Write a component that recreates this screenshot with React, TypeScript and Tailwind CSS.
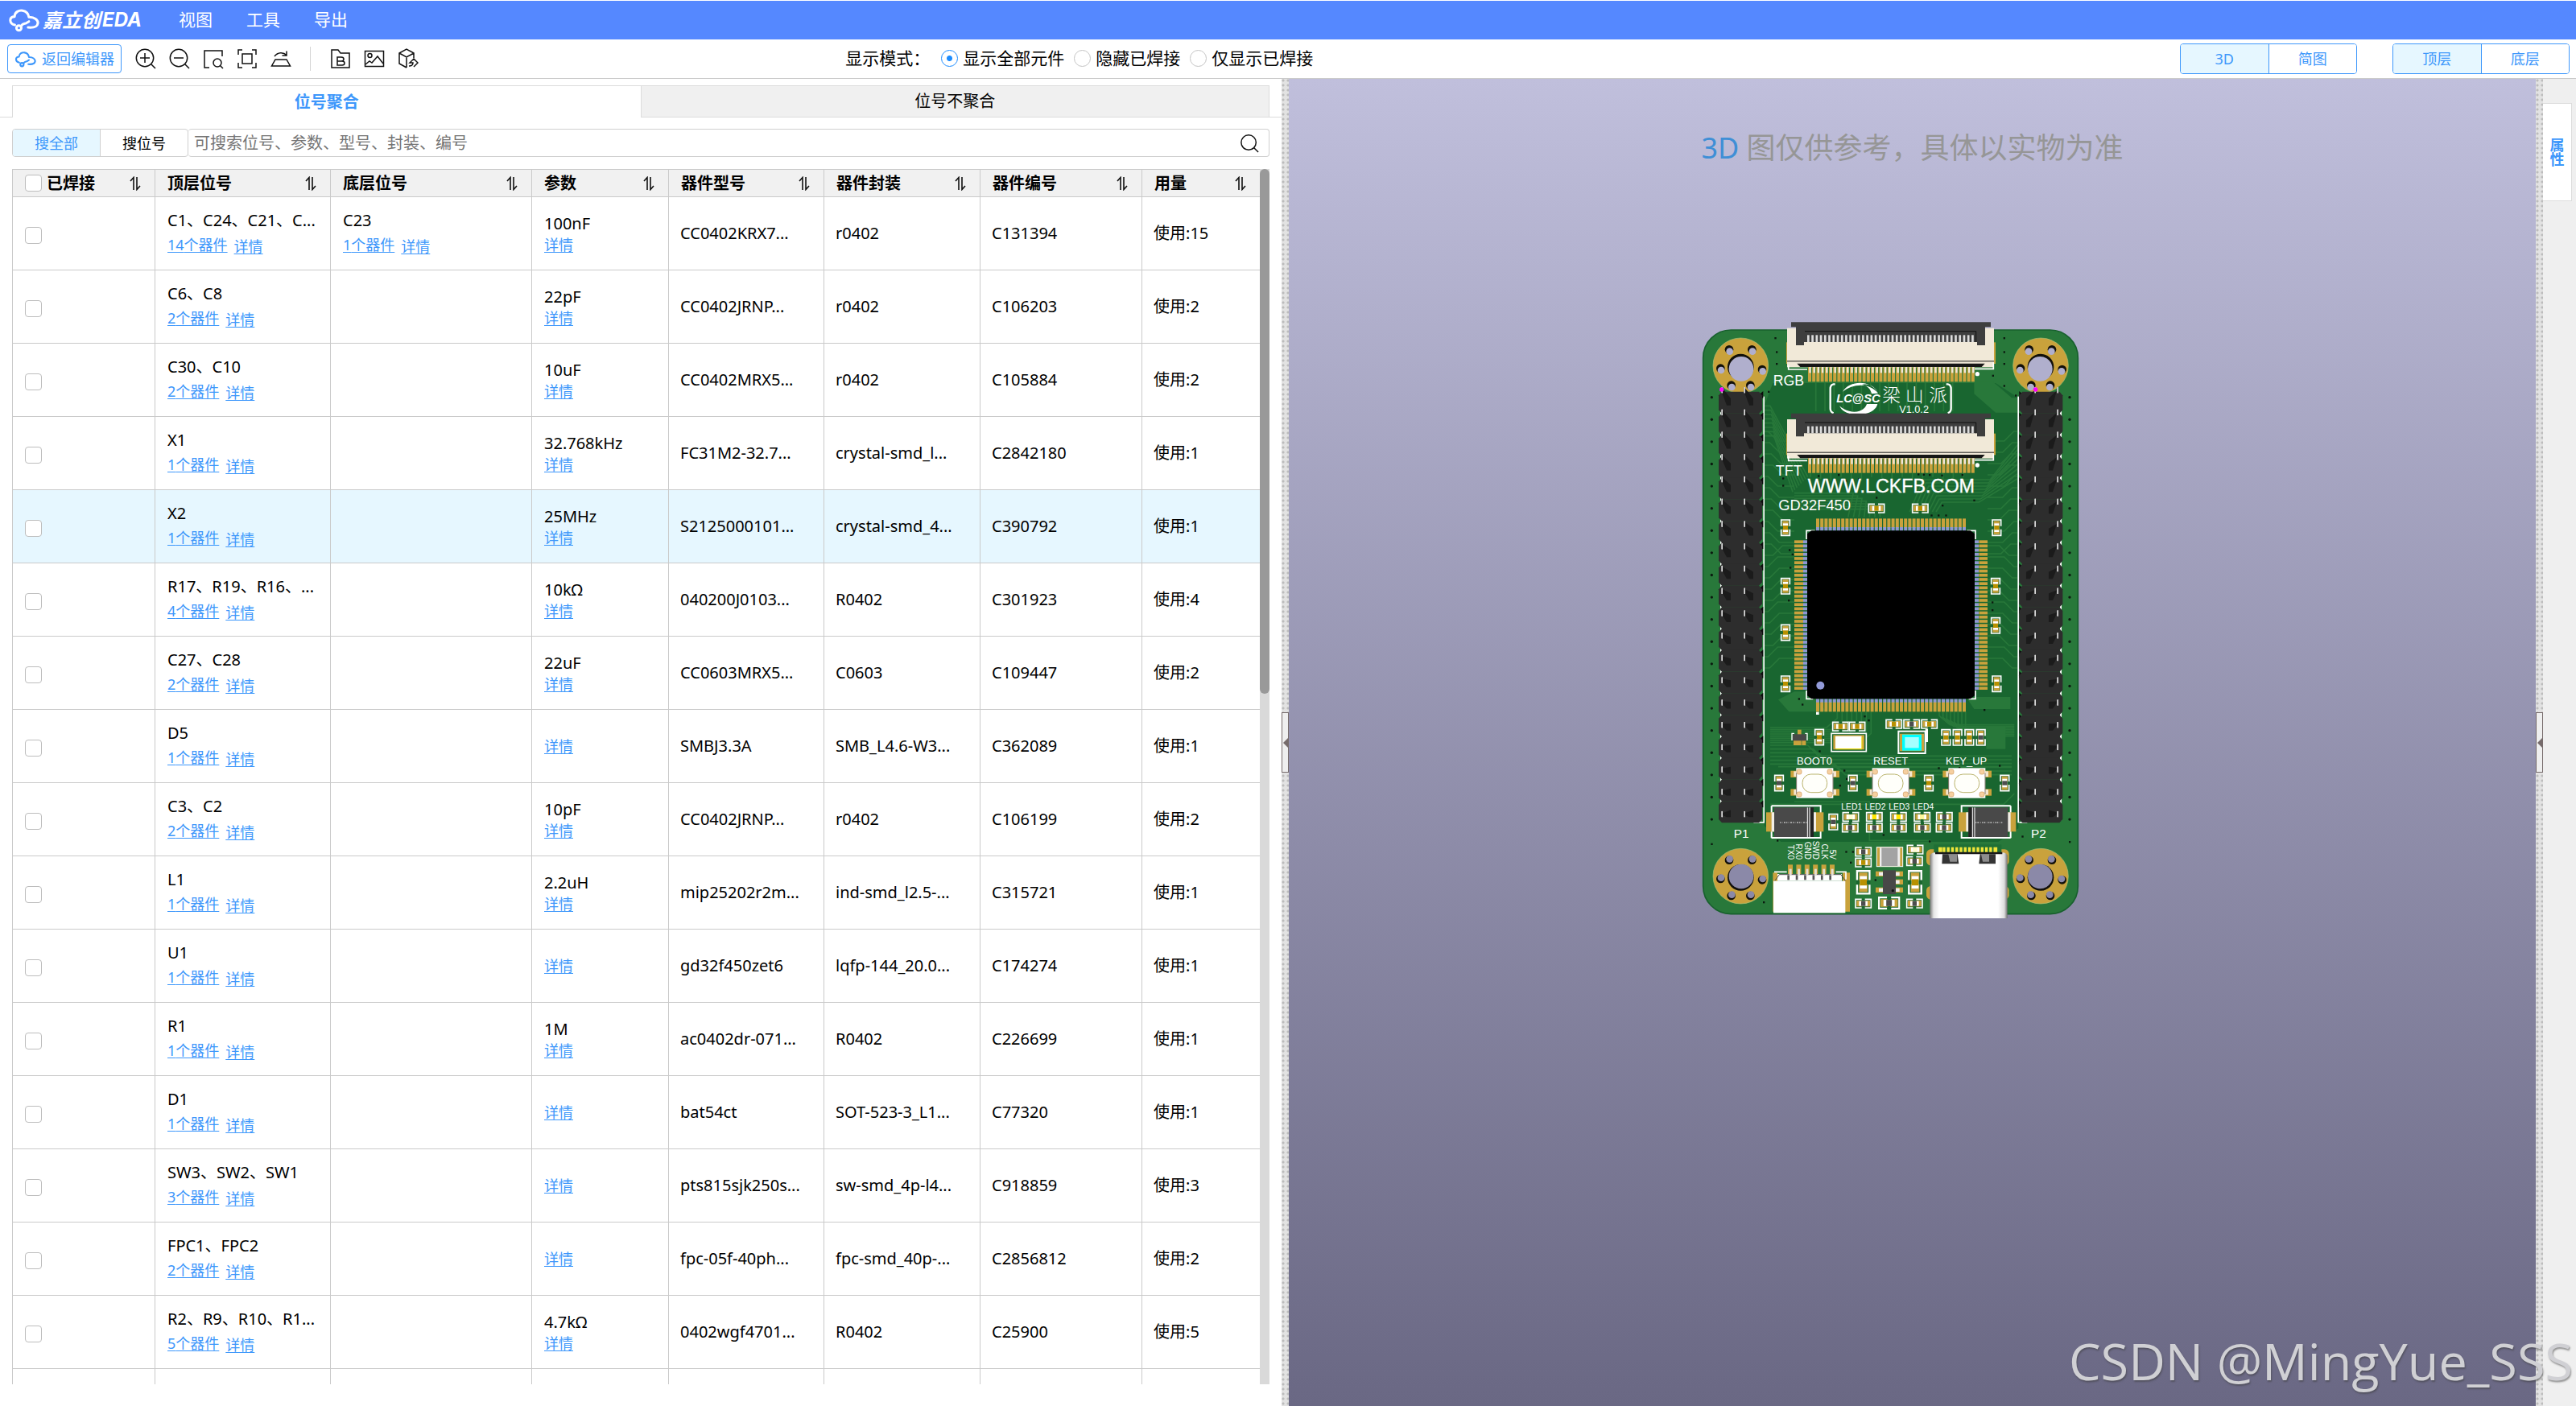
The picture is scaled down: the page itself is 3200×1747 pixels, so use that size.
import React from "react";

type Part = {
  top: string;
  topCount: number;
  bottom?: string;
  bottomCount?: number;
  value?: string;
  model: string;
  pack: string;
  code: string;
  used: number;
  active?: boolean;
};

const parts: Part[] = [
  { top: "C1、C24、C21、C...", topCount: 14, bottom: "C23", bottomCount: 1, value: "100nF", model: "CC0402KRX7...", pack: "r0402", code: "C131394", used: 15 },
  { top: "C6、C8", topCount: 2, value: "22pF", model: "CC0402JRNP...", pack: "r0402", code: "C106203", used: 2 },
  { top: "C30、C10", topCount: 2, value: "10uF", model: "CC0402MRX5...", pack: "r0402", code: "C105884", used: 2 },
  { top: "X1", topCount: 1, value: "32.768kHz", model: "FC31M2-32.7...", pack: "crystal-smd_l...", code: "C2842180", used: 1 },
  { top: "X2", topCount: 1, value: "25MHz", model: "S2125000101...", pack: "crystal-smd_4...", code: "C390792", used: 1, active: true },
  { top: "R17、R19、R16、...", topCount: 4, value: "10kΩ", model: "040200J0103...", pack: "R0402", code: "C301923", used: 4 },
  { top: "C27、C28", topCount: 2, value: "22uF", model: "CC0603MRX5...", pack: "C0603", code: "C109447", used: 2 },
  { top: "D5", topCount: 1, model: "SMBJ3.3A", pack: "SMB_L4.6-W3...", code: "C362089", used: 1 },
  { top: "C3、C2", topCount: 2, value: "10pF", model: "CC0402JRNP...", pack: "r0402", code: "C106199", used: 2 },
  { top: "L1", topCount: 1, value: "2.2uH", model: "mip25202r2m...", pack: "ind-smd_l2.5-...", code: "C315721", used: 1 },
  { top: "U1", topCount: 1, model: "gd32f450zet6", pack: "lqfp-144_20.0...", code: "C174274", used: 1 },
  { top: "R1", topCount: 1, value: "1M", model: "ac0402dr-071...", pack: "R0402", code: "C226699", used: 1 },
  { top: "D1", topCount: 1, model: "bat54ct", pack: "SOT-523-3_L1...", code: "C77320", used: 1 },
  { top: "SW3、SW2、SW1", topCount: 3, model: "pts815sjk250s...", pack: "sw-smd_4p-l4...", code: "C918859", used: 3 },
  { top: "FPC1、FPC2", topCount: 2, model: "fpc-05f-40ph...", pack: "fpc-smd_40p-...", code: "C2856812", used: 2 },
  { top: "R2、R9、R10、R1...", topCount: 5, value: "4.7kΩ", model: "0402wgf4701...", pack: "R0402", code: "C25900", used: 5 },
];

const range = (n: number) => Array.from({ length: n }, (_, i) => i);

function CloudIcon({ className }: { className: string }) {
  return (
    <svg viewBox="30 30 116 88" className={className} fill="none" stroke="currentColor" strokeWidth={9} strokeLinecap="round" strokeLinejoin="round">
      <path d="M55 92C33 86 33 62 54 61C55 43 71 37 84 39C97 41 105 50 107 63C127 62 142 74 140 86C138 99 128 103 104 101" />
      <circle cx={70} cy={103} r={9} />
      <path d="M79 95C84 86 92 88 97 85L107 79" />
    </svg>
  );
}

function ToolButton({ label, children }: { label: string; children: React.ReactNode }) {
  return (
    <button type="button" aria-label={label} title={label} className="flex h-9 w-[42px] shrink-0 items-center justify-center">
      <svg viewBox="0 0 26 26" className="h-[26px] w-[26px]" fill="none" stroke="#111" strokeWidth={1.5}>
        {children}
      </svg>
    </button>
  );
}

function SortIcon() {
  return (
    <svg viewBox="0 0 14 18" className="h-[18px] w-[14px]" fill="none" stroke="#111" strokeWidth={1.6}>
      <path d="M1 6L5 1.500V17M9 1V16.500L13 12" />
    </svg>
  );
}

function Toggle({ left, right }: { left: string; right: string }) {
  return (
    <div className="flex h-[38px] w-[220px] overflow-hidden rounded border border-[#3d97fb] text-lg text-[#3d97fb]">
      <button type="button" className="flex-1 border-r border-[#3d97fb] bg-[#e6f7ff]">{left}</button>
      <button type="button" className="flex-1 bg-white">{right}</button>
    </div>
  );
}

function Radio({ label, checked }: { label: string; checked?: boolean }) {
  return (
    <label className="mr-3 flex items-center gap-[6px]">
      <input
        type="radio"
        name="mode"
        defaultChecked={checked}
        className="h-[21px] w-[21px] appearance-none rounded-full border border-[#c4c4c4] bg-white checked:border-[#1c8cff] checked:bg-[radial-gradient(circle,#1c8cff_3px,transparent_4px)]"
      />
      <span>{label}</span>
    </label>
  );
}

function Check({ label }: { label: string }) {
  return (
    <input
      type="checkbox"
      aria-label={label}
      className="block h-[21px] w-[21px] shrink-0 appearance-none rounded border border-[#bdbdbd] bg-white checked:bg-[#3d97fb]"
    />
  );
}

function Detail() {
  return <a href="#detail" className="text-lg leading-6 text-[#3d97fb] underline underline-offset-2">详情</a>;
}

function Refs({ names, count }: { names: string; count: number }) {
  return (
    <>
      <div className="leading-8">{names}</div>
      <div className="flex h-8 gap-2">
        <a href="#parts" className="text-lg leading-7 text-[#3d97fb] underline underline-offset-2">{count}个器件</a>
        <a href="#detail" className="text-lg leading-8 text-[#3d97fb] underline underline-offset-2">详情</a>
      </div>
    </>
  );
}

function Splitter({ label }: { label: string }) {
  return (
    <div className="flex w-[9px] shrink-0 items-center bg-[#e2e2e2] bg-[radial-gradient(circle_at_2px_2px,#bcbcbc_1px,transparent_2px)] bg-[size:6px_6px]">
      <button type="button" aria-label={label} className="flex h-[75px] w-full items-center justify-center border border-[#766b6b] bg-[#efefef]">
        <svg viewBox="0 0 6 12" className="h-3 w-[6px] shrink-0"><path d="M0 6L6 0V12Z" fill="#766b6b" /></svg>
      </button>
    </div>
  );
}

const SILK = "#ffffff";
const GOLD = "#c9a23c";

function Passive({ x, y, v, c = "#b89000", k = 1 }: { x: number; y: number; v?: boolean; c?: string; k?: number }) {
  return (
    <g transform={`translate(${x} ${y}) rotate(${v ? 90 : 0}) scale(${k})`}>
      <rect x={-31} y={-18} width={62} height={36} fill="#1b6630" />
      <path d="M-6-16H-29V16H-6M6-16H29V16H6" fill="none" stroke={SILK} strokeWidth={5} />
      <rect x={-25} y={-11} width={20} height={22} fill={GOLD} />
      <rect x={5} y={-11} width={20} height={22} fill={GOLD} />
      <rect x={-16} y={-9} width={32} height={18} fill="#fff" />
      <rect x={-8} y={-9} width={16} height={18} fill={c} />
    </g>
  );
}

function MountHole({ x, y, hole, dx, dy }: { x: number; y: number; hole: string; dx: number; dy: number }) {
  const small = [[-43, -60], [42, -60], [-75, 10], [80, 14], [-35, 73], [36, 73]];
  return (
    <g>
      <circle cx={x} cy={y} r={103} fill={GOLD} stroke="#a9c277" strokeWidth={2} />
      <circle cx={x} cy={y + 5} r={49} fill="#12100a" />
      <circle cx={x + dx} cy={y + 5 + dy} r={46} fill={hole} />
      {small.map(([a, b], i) => (
        <g key={i}>
          <circle cx={x + a} cy={y + b} r={16} fill="#12100a" />
          <circle cx={x + a + dx} cy={y + b + dy} r={13} fill={hole} />
        </g>
      ))}
    </g>
  );
}

function PinHeader({ x, dir }: { x: number; dir: number }) {
  return (
    <g>
      <rect x={dir > 0 ? x + 166 : x - 6} y={340} width={5} height={1589} fill={SILK} />
      <rect x={dir > 0 ? x + 6 : x + 152} y={380} width={6} height={1540} fill={SILK} />
      <rect x={dir > 0 ? x + 130 : x} y={1925} width={dir > 0 ? 40 : 30} height={5} fill={SILK} />
      {range(20).map((i) => {
        const y = 322 + i * 80.3;
        return (
          <g key={i}>
            <path d={dir > 0 ? `M${x + 140} ${y + 20}L${x + 166} ${y - 2}V${y + 24}Z` : `M${x + 24} ${y + 20}L${x} ${y - 2}V${y + 24}Z`} fill="#0b0b0b" />
            <path d={`M${x + 12} ${y}H${x + 150}L${x + 162} ${y + 14}V${y + 68}L${x + 150} ${y + 81}H${x + 12}L${x} ${y + 68}V${y + 14}Z`} fill="#2d2d2d" />
          </g>
        );
      })}
      {range(20).map((i) => {
        const y = 305 + i * 83.2;
        const len = Math.round(60 - i * 2.4);
        return [dir > 0 ? 12 : 59, dir > 0 ? 96 : 143].map((px) => (
          <g key={`${i}-${px}`}>
            <path d={`M${x + px - 3} ${y + 12}L${x + px + 4} ${y + 6}L${x + px + dir * 33} ${y + len - 18}V${y + len + 8}H${x + px + dir * 18}Z`} fill="#1b1b1b" />
            <rect x={x + px - 3} y={y} width={6} height={22} fill="#a8a8a8" />
            <rect x={x + px} y={y} width={3} height={22} fill="#dcdcdc" />
          </g>
        ));
      })}
    </g>
  );
}

function FlatConnector({ y }: { y: number }) {
  return (
    <g transform={`translate(0 ${y})`}>
      <rect x={390} y={75} width={780} height={80} fill={GOLD} />
      <rect x={393} y={22} width={771} height={146} fill="#f1e9d8" />
      <path d="M398 160V176H468M1092 174H1162V150" fill="none" stroke={SILK} strokeWidth={5} />
      <path d="M408 0H1152V18H1131V86H1101V74H456V86H426V18H408Z" fill="#3e3e3e" />
      <path d="M459 34H1097V74" fill="none" stroke="#111" strokeWidth={3} />
      {range(40).map((i) => (
        <rect key={i} x={468 + i * 15.7} y={48} width={8} height={26} fill="#dcdcdc" />
      ))}
      <rect x={393} y={144} width={771} height={3} fill="#1a1a1a" />
      <path d="M430 154H1130L1118 167H442Z" fill="#161616" />
      {range(40).map((i) => (
        <g key={i}>
          <rect x={471 + i * 15.6} y={167} width={12} height={55} fill={GOLD} />
          <rect x={475 + i * 15.6} y={167} width={7} height={22} fill="#eee8dc" />
        </g>
      ))}
      <circle cx={1102} cy={193} r={8} fill={SILK} />
    </g>
  );
}

function TactSwitch({ x }: { x: number }) {
  return (
    <g transform={`translate(${x} 1781)`}>
      {[-46, 22].map((y) => <rect key={y} x={-90} y={y} width={182} height={25} fill={GOLD} />)}
      {[-46, 22].map((y) => <rect key={y} x={-78} y={y + 2} width={158} height={20} fill="#f4e6cf" />)}
      <rect x={-69} y={-56} width={138} height={112} fill="#fff" />
      <path d="M-68-38V42M68-38V42" stroke="#4a3a2a" strokeWidth={2} />
      {[[-58, -42], [56, -42], [-58, 42], [56, 42]].map(([a, b]) => (
        <rect key={`${a}${b}`} x={a - 9} y={b - 9} width={18} height={18} rx={6} fill="#f6cfa0" stroke="#cf9a5c" strokeWidth={2} />
      ))}
      <rect x={-46} y={-33} width={92} height={68} rx={32} fill="#fffffa" stroke="#b9b26a" strokeWidth={3} />
    </g>
  );
}

function PowerDiode({ x, flip }: { x: number; flip?: boolean }) {
  return (
    <g transform={`translate(${x} 1926) scale(${flip ? -1 : 1} 1)`}>
      <path d="M-87-60V60M-87-60H96V-30M-87 59H96V30" fill="none" stroke={SILK} strokeWidth={6} />
      <rect x={-107} y={-36} width={214} height={72} fill={GOLD} />
      <rect x={-87} y={-36} width={166} height={72} fill="#f1eee6" />
      <rect x={-77} y={-54} width={147} height={110} fill="#494949" />
      <path d="M47-54V56M55-54V56" stroke="#fff" strokeWidth={3} />
      <rect x={58} y={-54} width={12} height={110} fill="#222" />
      <path d="M-56 2H44" stroke="#a0a0a0" strokeWidth={6} strokeDasharray="4 4 2 5 6 3" />
    </g>
  );
}

const passives: { x: number; y: number; v?: boolean; c?: string; k?: number }[] = [
  { x: 726, y: 757 }, { x: 889, y: 757 },
  { x: 387, y: 829, v: true }, { x: 1174, y: 829, v: true },
  { x: 387, y: 1047, v: true }, { x: 1170, y: 1047, v: true },
  { x: 387, y: 1220, v: true }, { x: 1170, y: 1194, v: true },
  { x: 387, y: 1411, v: true }, { x: 1174, y: 1411, v: true },
  { x: 592, y: 1570 }, { x: 654, y: 1570 },
  { x: 791, y: 1561 }, { x: 857, y: 1561, c: "#4d4d4d" }, { x: 923, y: 1561 },
  { x: 513, y: 1610, v: true }, { x: 985, y: 1611, v: true }, { x: 1028, y: 1611, v: true },
  { x: 1072, y: 1611, v: true }, { x: 1115, y: 1611, v: true, c: "#4d4d4d" },
  { x: 363, y: 1781, v: true, c: "#4d4d4d" }, { x: 638, y: 1781, v: true, c: "#4d4d4d" },
  { x: 921, y: 1781, v: true }, { x: 1204, y: 1781, v: true, c: "#4d4d4d" },
  { x: 565, y: 1926, v: true, c: "#4d4d4d" },
  { x: 630, y: 1907, c: "#fffbd0" }, { x: 718, y: 1907, c: "#ffe600" }, { x: 808, y: 1907, c: "#ffe600" },
  { x: 896, y: 1907, c: "#fff59a" }, { x: 979, y: 1907, c: "#4d4d4d" },
  { x: 628, y: 1947, c: "#4d4d4d" }, { x: 718, y: 1947, c: "#4d4d4d" }, { x: 808, y: 1947, c: "#4d4d4d" },
  { x: 897, y: 1947, c: "#4d4d4d" }, { x: 978, y: 1947, c: "#4d4d4d" },
  { x: 677, y: 2037, c: "#4d4d4d" }, { x: 677, y: 2077 },
  { x: 870, y: 2029, c: "#fffbd0" }, { x: 868, y: 2072, c: "#4d4d4d" },
  { x: 677, y: 2230, c: "#4d4d4d" }, { x: 868, y: 2230, c: "#4d4d4d" },
  { x: 773, y: 2228, c: "#4d4d4d", k: 1.3 },
  { x: 677, y: 2151, v: true, k: 1.45 }, { x: 870, y: 2151, v: true, k: 1.45 },
];

function Board() {
  return (
    <svg viewBox="60 50 1440 2260" className="h-auto w-full" role="img" aria-label="PCB" fontFamily="'Liberation Sans', sans-serif" fill={SILK}>
      <defs>
        <linearGradient id="usb" x1="0" x2="1" y1="0" y2="0">
          <stop offset="0" stopColor="#777" />
          <stop offset="0.05" stopColor="#e6e6e6" />
          <stop offset="0.12" stopColor="#fff" />
          <stop offset="0.88" stopColor="#fff" />
          <stop offset="0.96" stopColor="#dcdcdc" />
          <stop offset="1" stopColor="#707070" />
        </linearGradient>
      </defs>
      <rect x={80} y={92} width={1397} height={2177} rx={104} fill="#28783a" stroke="#17602d" strokeWidth={5} />
      <path d="M308 375L340 290H1170L1255 345V1950L1180 2000H370L308 1940Z" fill="#196630" />
      <path d="M395 100H1165V230H395ZM1090 285H1160L1230 345H1255V400H1170L1090 330Z" fill="#28783a" />

      <g fill="none" stroke="#28783a" strokeWidth={5}>
        {range(22).map((i) => <path key={i} d={`M308 ${470 + i * 42}h${14 + (i % 4) * 6}l${36} ${i < 11 ? 36 : -36}H420`} />)}
        {range(22).map((i) => <path key={i} d={`M1252 ${470 + i * 42}h-${14 + (i % 4) * 6}l-36 ${i < 11 ? 36 : -36}H1140`} />)}
        {range(16).map((i) => <path key={i} d={`M${500 + i * 34} 290V${395}M${480 + i * 38} 622V${640 + (i % 3) * 8}`} />)}
        {range(8).map((i) => <path key={i} d={`M308 ${375 + i * 16}H${330 + i * 2}L${470 - i * 8} ${640 - i * 4 + i * 12}`} />)}
        {range(8).map((i) => <path key={i} d={`M1252 ${520 + i * 18}L${1150 - i * 6} ${650 + i * 12}H${900 + i * 10}L${850 + i * 14} ${770}`} />)}
        {range(7).map((i) => <path key={i} d={`M420 ${700 + i * 10}H${640 + i * 16}L${620 + i * 20} 790`} />)}
        {range(8).map((i) => <path key={i} d={`M${580 + i * 18} 1515V${1540 + i * 8}l-40 34H${330}`} />)}
        {range(8).map((i) => <path key={i} d={`M${960 + i * 14} 1515V${1530 + i * 6}l40 34H1240`} />)}
        {range(6).map((i) => <path key={i} d={`M330 ${1640 + i * 14}H${470 + i * 20}l40 40H1230`} />)}
        <path d="M360 1720H1230M330 1860H1200L1240 1820M420 1850H700V1995H930" />
      </g>
      <path d="M360 1470L420 1440H480L540 1515H400ZM1060 1460H1225V1505H1090Z" fill="#28783a" />
      <rect x={1135} y={1570} width={72} height={84} fill="#28783a" />

      <g fill="#0b1a0f">
        {range(20).map((i) => (
          <g key={i}>
            <circle cx={112} cy={343 + i * 82.8} r={5} />
            <circle cx={1446} cy={343 + i * 82.8} r={5} />
          </g>
        ))}
        {[[349, 122], [354, 174], [354, 218], [1202, 122], [1202, 174], [1202, 218], [1160, 262], [1202, 300], [1245, 336], [324, 322], [378, 645], [378, 672], [510, 636], [585, 632], [882, 630], [902, 631], [924, 632], [970, 634], [1046, 632], [660, 648], [612, 655], [726, 717], [972, 746], [1090, 727], [931, 783], [957, 783], [985, 783], [402, 912], [413, 928], [405, 978], [399, 1100], [1158, 1107], [1158, 1136], [112, 2008], [1446, 2000], [306, 2225], [357, 1995], [437, 1467], [450, 1488], [1128, 1508], [682, 1532], [697, 1547], [514, 1662], [590, 1790], [606, 1734], [615, 1765], [958, 1725], [1185, 1716], [630, 2077], [613, 2037], [638, 2037], [722, 2142], [924, 1998], [752, 1974], [1035, 1724], [1270, 1980]].map(([x, y]) => (
          <rect key={`${x}-${y}`} x={x - 3} y={y - 3} width={7} height={7} />
        ))}
      </g>

      <MountHole x={220} y={225} hole="#b0afcd" dx={2} dy={7} />
      <MountHole x={1338} y={225} hole="#b0afcd" dx={-2} dy={7} />
      <MountHole x={220} y={2128} hole="#8b89a8" dx={2} dy={-4} />
      <MountHole x={1338} y={2128} hole="#8b89a8" dx={-2} dy={-4} />
      <PinHeader x={138} dir={1} />
      <PinHeader x={1258} dir={-1} />
      <circle cx={149} cy={314} r={8} fill="#f0f" />
      <circle cx={1319} cy={314} r={8} fill="#f0f" />

      <FlatConnector y={63} />
      <g>
        <path d="M572 294H566Q554 296 554 312V384Q554 398 566 402M986 294H992Q1004 296 1004 312V384Q1004 398 992 402" fill="none" stroke={SILK} strokeWidth={7} />
        <path d="M600 322C625 280 705 275 732 328C700 288 640 290 600 322ZM588 375C610 425 720 415 730 368H690C680 400 630 410 588 375ZM672 296C700 302 705 318 708 330L732 328C722 304 700 290 672 296Z" />
        <text x={577} y={362} fontSize={44} fontWeight={700} fontStyle="italic">LC@SC</text>
        <g fontSize={68} fontWeight={300} fontFamily="'Noto Sans CJK SC', sans-serif">
          <text x={748} y={360}>梁</text>
          <text x={834} y={360}>山</text>
          <text x={922} y={360}>派</text>
        </g>
        <text x={811} y={402} fontSize={38}>V1.0.2</text>
      </g>
      <FlatConnector y={403} />

      <text x={341} y={300} fontSize={53}>RGB</text>
      <text x={350} y={636} fontSize={54}>TFT</text>
      <text x={470} y={698} fontSize={70} stroke={SILK} strokeWidth={1}>WWW.LCKFB.COM</text>
      <text x={361} y={765} fontSize={55}>GD32F450</text>

      {range(36).map((i) => (
        <g key={i}>
          <rect x={501 + i * 15.6} y={795} width={12} height={34} fill={GOLD} />
          <rect x={501 + i * 15.6} y={827} width={12} height={14} fill="#8f97d2" />
          <rect x={501 + i * 15.6} y={1467} width={12} height={14} fill="#8f97d2" />
          <rect x={501 + i * 15.6} y={1480} width={12} height={35} fill={GOLD} />
          <rect x={420} y={876 + i * 15.6} width={33} height={11} fill={GOLD} />
          <rect x={453} y={876 + i * 15.6} width={15} height={11} fill="#8f97d2" />
          <rect x={1092} y={876 + i * 15.6} width={15} height={11} fill="#8f97d2" />
          <rect x={1108} y={876 + i * 15.6} width={32} height={11} fill={GOLD} />
        </g>
      ))}
      <path d="M465 872V840H497M1063 840H1095V872M465 1436V1467H490M1070 1467H1095V1436" fill="none" stroke={SILK} strokeWidth={5} />
      <path d="M484 840H1076L1092 852V1455L1076 1467H484L468 1455V852Z" fill="#000" />
      <circle cx={517} cy={1417} r={15} fill="#929ad8" />
      <rect x={501} y={1516} width={11} height={10} />

      {passives.map((p, i) => <Passive key={i} {...p} />)}

      <g>
        <rect x={558} y={1596} width={130} height={67} fill="#196630" stroke={SILK} strokeWidth={5} />
        <rect x={565} y={1602} width={116} height={54} fill={GOLD} />
        <rect x={573} y={1606} width={98} height={46} fill="#fff" />
        <path d="M575 1654H672V1608" fill="none" stroke="#f3e200" strokeWidth={3} />
      </g>
      <g>
        <rect x={808} y={1588} width={100} height={82} fill="#196630" stroke={SILK} strokeWidth={6} />
        <rect x={908} y={1580} width={10} height={48} />
        <rect x={813} y={1597} width={90} height={65} fill={GOLD} />
        <rect x={822} y={1600} width={72} height={60} fill="#0ff" />
        <rect x={832} y={1610} width={52} height={40} fill="#a6ffff" />
      </g>
      <g>
        <rect x={432} y={1582} width={14} height={58} fill={GOLD} />
        <rect x={417} y={1620} width={15} height={20} fill={GOLD} />
        <rect x={448} y={1620} width={15} height={20} fill={GOLD} />
        <path d="M420 1596H411V1622M460 1596H468V1622" fill="none" stroke={SILK} strokeWidth={4} />
        <rect x={414} y={1599} width={50} height={24} fill="#484848" />
      </g>

      <text x={429} y={1713} fontSize={39}>BOOT0</text>
      <text x={714} y={1713} fontSize={39}>RESET</text>
      <text x={984} y={1713} fontSize={39}>KEY_UP</text>
      <TactSwitch x={496} />
      <TactSwitch x={779} />
      <TactSwitch x={1063} />
      {[595, 683, 772, 862].map((x, i) => (
        <text key={x} x={x} y={1881} fontSize={31}>LED{i + 1}</text>
      ))}
      <PowerDiode x={422} />
      <PowerDiode x={1139} flip />
      <text x={194} y={1984} fontSize={46}>P1</text>
      <text x={1302} y={1984} fontSize={46}>P2</text>

      {["TX0", "RX0", "GND", "SWD", "CLK", "5V"].map((t, i) => (
        <text key={t} transform={`translate(${395 + i * 31.5} 2066) rotate(90)`} textAnchor="end" fontSize={30}>{t}</text>
      ))}
      <g>
        <path d="M340 2115H357V2260H340ZM600 2115H627V2260H600Z" fill={GOLD} />
        <path d="M345 2112H392M575 2112H612V2140" fill="none" stroke={SILK} strokeWidth={5} />
        {range(6).map((i) => <rect key={i} x={396 + i * 31.2} y={2085} width={18} height={38} fill={GOLD} />)}
        <rect x={357} y={2120} width={240} height={26} fill="#fff" />
        <path d="M347 2146L364 2122H594L610 2146" fill="none" stroke="#4c4c4c" strokeWidth={3} />
        {range(6).map((i) => <rect key={i} x={394 + i * 31.2} y={2124} width={8} height={18} fill="#555" />)}
        {range(6).map((i) => <rect key={i} x={401 + i * 31.2} y={2101} width={9} height={24} fill="#e4dfd3" />)}
        <rect x={342} y={2146} width={268} height={119} fill="#fff" />
      </g>
      <g>
        <rect x={727} y={2020} width={97} height={72} fill={GOLD} stroke="#fff" strokeWidth={3} />
        <rect x={738} y={2022} width={76} height={68} fill="#eee" />
        <rect x={745} y={2022} width={60} height={68} fill="#a3a3a3" />
        {[2110, 2140, 2170].map((y) => (
          <g key={y}>
            {y !== 2140 && <rect x={723} y={y} width={28} height={19} fill={GOLD} />}
            {y !== 2140 && <rect x={735} y={y + 3} width={16} height={13} fill="#eee" />}
            <rect x={798} y={y} width={27} height={19} fill={GOLD} />
            <rect x={798} y={y + 3} width={14} height={13} fill="#eee" />
          </g>
        ))}
        <rect x={750} y={2106} width={48} height={89} fill="#484848" />
        <circle cx={787} cy={2182} r={5} fill="#111" />
      </g>
      <g>
        <rect x={912} y={2028} width={308} height={60} rx={16} fill={GOLD} />
        <rect x={912} y={2165} width={308} height={50} rx={16} fill={GOLD} />
        <rect x={940} y={2010} width={252} height={40} fill="#1f6f35" />
        {range(14).map((i) => <rect key={i} x={957 + i * 15.8} y={2020} width={i % 13 === 0 ? 14 : 10} height={22} fill="#f1e53a" />)}
        <path d="M925 2052Q928 2041 945 2040H1195Q1212 2041 1214 2052V2285H925Z" fill="url(#usb)" />
        <path d="M945 2042H1195" stroke="#1a1a1a" strokeWidth={7} />
        <path d="M972 2046H1028L1033 2082H970ZM1112 2046H1170V2082H1108Z" fill="#353535" />
        <path d="M994 2046H1026V2074H1000ZM1116 2046H1146V2074H1122Z" fill="#8d8d8d" />
      </g>
    </svg>
  );
}

const columns: { title: string; width: string }[] = [
  { title: "顶层位号", width: "w-[218px]" },
  { title: "底层位号", width: "w-[250px]" },
  { title: "参数", width: "w-[170px]" },
  { title: "器件型号", width: "w-[193px]" },
  { title: "器件封装", width: "w-[194px]" },
  { title: "器件编号", width: "w-[201px]" },
  { title: "用量", width: "w-[147px]" },
];

export default function App() {
  return (
    <div className="relative flex h-screen flex-col overflow-hidden bg-white pt-px font-['Noto_Sans','Noto_Sans_CJK_SC',sans-serif] text-xl text-black">
      <header className="flex h-12 shrink-0 items-center bg-[#5588ff] pl-[10px] text-white">
        <CloudIcon className="h-[30px] w-[39px]" />
        <span className="ml-1 flex w-[169px] items-center gap-[2px] text-2xl font-bold italic">
          嘉立创<span className="font-['Inter',sans-serif]">EDA</span>
        </span>
        <nav className="flex gap-[42px] text-[21px]">
          <button type="button">视图</button>
          <button type="button">工具</button>
          <button type="button">导出</button>
        </nav>
      </header>

      <div className="flex h-[49px] shrink-0 items-center border-b border-[#cacaca] pr-2">
        <div className="flex w-[32.9%] shrink-0 items-center pl-[9px]">
          <button type="button" className="mr-[9px] flex h-9 w-[142px] shrink-0 items-center gap-[7px] rounded border border-[#3d97fb] pl-2 text-lg text-[#3d97fb]">
            <CloudIcon className="h-[21px] w-[27px] shrink-0" />
            返回编辑器
          </button>
          <ToolButton label="放大"><circle cx={12} cy={12} r={10.700} /><path d="M19.500 19.500L25 25M12 6V18M6 12H18" /></ToolButton>
          <ToolButton label="缩小"><circle cx={12} cy={12} r={10.700} /><path d="M19.500 19.500L25 25M6 12H18" /></ToolButton>
          <ToolButton label="框选放大"><path d="M24 10V3H2V24H8" /><circle cx={18} cy={18} r={5} /><path d="M21.500 21.500L25 25" /></ToolButton>
          <ToolButton label="适应窗口"><path d="M7 2H2V8M19 2H24V8M7 24H2V18M19 24H24V18" /><rect x={7} y={7} width={12} height={12} /></ToolButton>
          <ToolButton label="翻转"><path d="M6 14H20L24.500 22H1.500ZM5 10C9 4.500 16 4.500 20 8.500M20 3.500V9H14.500" /></ToolButton>
          <span className="ml-[15px] mr-4 h-[30px] w-px bg-[#d4d4d4]" />
          <ToolButton label="导出BOM"><path d="M2 24V2H10L13 6H24V24Z" /><path d="M9 11H14Q17 11 17 13.500T14 16H9ZM9 16H15Q18 16 18 18.500T15 21H9Z" /></ToolButton>
          <ToolButton label="导出图片"><rect x={1.500} y={3.500} width={23} height={19} /><circle cx={7.500} cy={9} r={2.500} /><path d="M2 20L7 16L10 18L17 10L24 19" /></ToolButton>
          <ToolButton label="导出3D"><path d="M11 24L2 19V6L11 1L20 6V12M2 6L11 11L20 6M11 11V24M14 22C18 22 19 20 19 18H15L20 13L25 18L20 23" /></ToolButton>
        </div>
        <fieldset className="flex items-center text-[21px]">
          <legend className="float-left mr-[14px]">显示模式：</legend>
          <Radio label="显示全部元件" checked />
          <Radio label="隐藏已焊接" />
          <Radio label="仅显示已焊接" />
        </fieldset>
        <div className="ml-auto flex gap-11">
          <Toggle left="3D" right="简图" />
          <Toggle left="顶层" right="底层" />
        </div>
      </div>

      <main className="flex min-h-0 flex-1">
        <section className="flex w-[49.75%] shrink-0 flex-col pt-2">
          <div className="flex h-10 shrink-0">
            <span className="w-[15px] border-b border-[#dcdcdc]" />
            <button type="button" className="flex-1 border-l border-t border-[#dcdcdc] font-bold text-[#3d97fb]">位号聚合</button>
            <button type="button" className="flex-1 border border-[#dcdcdc] bg-[#f0f0f0]">位号不聚合</button>
            <span className="w-[15px] border-b border-[#dcdcdc]" />
          </div>

          <div className="mx-[15px] mt-[14px] flex h-[35px] shrink-0">
            <div className="flex w-[219px] shrink-0 overflow-hidden rounded border border-[#cfcfcf] text-lg">
              <button type="button" className="flex-1 border-r border-[#cfcfcf] bg-[#e6f7ff] text-[#3d97fb]">搜全部</button>
              <button type="button" className="flex-1">搜位号</button>
            </div>
            <div className="flex min-w-0 flex-1 items-center rounded border border-l-0 border-[#cfcfcf] pl-[7px] pr-3">
              <input aria-label="搜索" placeholder="可搜索位号、参数、型号、封装、编号" className="min-w-0 flex-1 bg-transparent outline-none placeholder:text-[#757575]" />
              <button type="button" aria-label="搜索">
                <svg viewBox="0 0 26 26" className="h-6 w-6" fill="none" stroke="#111" strokeWidth={1.6}>
                  <circle cx={12} cy={12} r={10} /><path d="M19 19L25 25" />
                </svg>
              </button>
            </div>
          </div>

          <div className="mx-[15px] mb-[27px] mt-[15px] flex min-h-0 flex-1 overflow-hidden">
            <div className="min-w-0 flex-1 overflow-hidden">
              <table className="w-full table-fixed border-collapse whitespace-nowrap text-left">
                <thead>
                  <tr className="h-[34px] bg-[#f1f1f1]">
                    <th className="w-[177px] border border-[#cacaca] pl-[15px] pr-[17px]">
                      <div className="flex items-center leading-8">
                        <Check label="全选" />
                        <span className="ml-[6px] flex-1">已焊接</span>
                        <SortIcon />
                      </div>
                    </th>
                    {columns.map((c) => (
                      <th key={c.title} className={`${c.width} border border-[#cacaca] pl-[15px] pr-[17px]`}>
                        <div className="flex items-center justify-between leading-8">{c.title}<SortIcon /></div>
                      </th>
                    ))}
                  </tr>
                </thead>
                <tbody>
                  {parts.map((p) => (
                    <tr key={p.top} className={p.active ? "h-[91px] bg-[#e6f7ff]" : "h-[91px]"}>
                      <td className="border border-[#cacaca] pl-[15px] pt-1"><Check label={p.top} /></td>
                      <td className="border border-[#cacaca] pl-[15px]"><Refs names={p.top} count={p.topCount} /></td>
                      <td className="border border-[#cacaca] pl-[15px]">{p.bottom && <Refs names={p.bottom} count={p.bottomCount ?? 1} />}</td>
                      <td className="border border-[#cacaca] pl-[15px]">
                        <div className="flex flex-col items-start">
                          {p.value && <span className="leading-7">{p.value}</span>}
                          <Detail />
                        </div>
                      </td>
                      <td className="border border-[#cacaca] pl-[14px]">{p.model}</td>
                      <td className="border border-[#cacaca] pl-[14px]">{p.pack}</td>
                      <td className="border border-[#cacaca] pl-[14px]">{p.code}</td>
                      <td className="border border-[#cacaca] pl-[14px]">使用:{p.used}</td>
                    </tr>
                  ))}
                  <tr className="h-[91px]">
                    {range(8).map((i) => <td key={i} className="border border-[#cacaca]" />)}
                  </tr>
                </tbody>
              </table>
            </div>
            <div className="w-3 shrink-0 bg-[#d9d9d9]">
              <div className="h-[43.2%] rounded-full bg-[#999]" />
            </div>
          </div>
        </section>

        <Splitter label="折叠左侧" />

        <section className="flex min-w-0 flex-1 flex-col items-center bg-linear-to-b from-[#c0bfdc] to-[#6a6884]">
          <p className="mt-[58px] text-4xl leading-[56px] text-[#969696]"><span className="text-[#3f8fd6]">3D</span> 图仅供参考，具体以实物为准</p>
          <div className="mr-[53px] mt-[184px] w-[480px]">
            <Board />
          </div>
        </section>

        <Splitter label="折叠右侧" />

        <aside className="w-[41px] shrink-0 bg-[#efefef] pt-[30px]">
          <button type="button" className="flex h-[122px] w-9 items-center justify-center border border-l-0 border-[#dcdcdc] bg-white text-lg font-bold leading-[18px] text-[#3d97fb]">
            <span className="w-[18px] break-all">属性</span>
          </button>
        </aside>
      </main>

      <div className="pointer-events-none absolute bottom-3 right-1 font-['Open_Sans',sans-serif] text-[63px] leading-[88px] text-[#d0d0d4] [text-shadow:1px_2px_2px_rgba(60,60,60,0.5)]">
        CSDN @MingYue_SSS
      </div>
    </div>
  );
}
